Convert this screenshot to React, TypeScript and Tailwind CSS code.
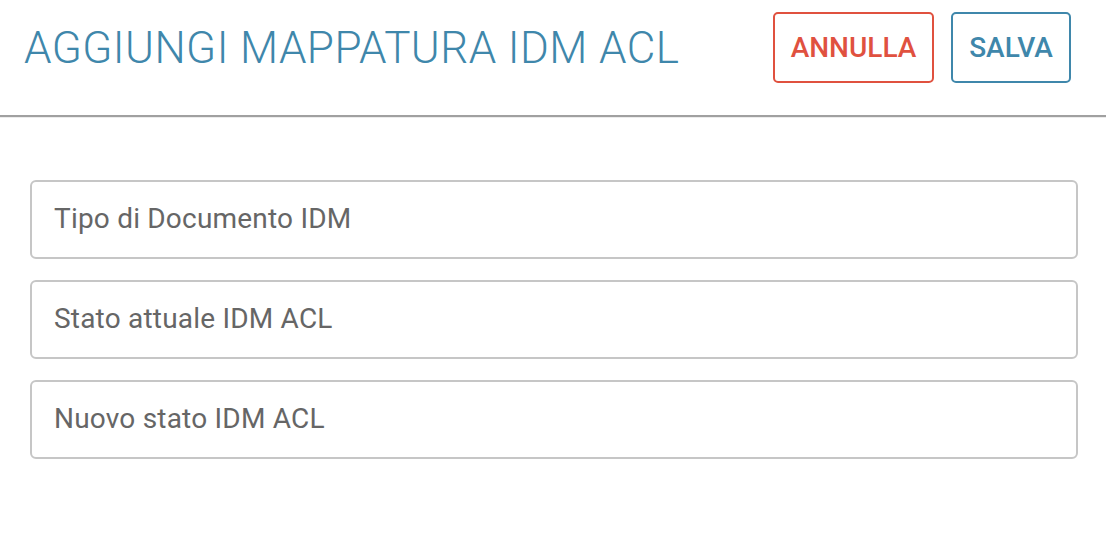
export default function App() {
  const fields = ["Tipo di Documento IDM", "Stato attuale IDM ACL", "Nuovo stato IDM ACL"];

  return (
    <div className="w-[1106px] h-[534px] bg-white" style={{ fontFamily: "Roboto, 'Liberation Sans', sans-serif" }}>
      <header className="h-[117px] flex items-start justify-between border-b-2 border-[#a0a0a0] shadow-[0_1px_0_#ececec]">
        <h1 className="pl-[24px] pt-[22px] text-[44px] leading-[52px] font-light text-[#3f87ab] tracking-[0.45px]">
          AGGIUNGI MAPPATURA IDM ACL
        </h1>
        <div className="flex gap-[17px] pt-[12px] pr-[35px]">
          <button className="w-[161px] h-[71px] border-2 border-[#e0513f] rounded-[5px] text-[#e0513f] text-[28px] font-medium">
            ANNULLA
          </button>
          <button className="w-[120px] h-[71px] border-2 border-[#3f87ab] rounded-[5px] text-[#3f87ab] text-[28px] font-medium">
            SALVA
          </button>
        </div>
      </header>
      <div className="flex flex-col gap-[21px] pt-[63px] pl-[30px] pr-[28px]">
        {fields.map((f) => (
          <div key={f} className="h-[79px] border-2 border-[#c6c6c6] rounded-[6px] flex items-center pl-[22px]">
            <span className="text-[28px] text-[#666666] tracking-[0.2px] -mt-[2px]">{f}</span>
          </div>
        ))}
      </div>
    </div>
  );
}
